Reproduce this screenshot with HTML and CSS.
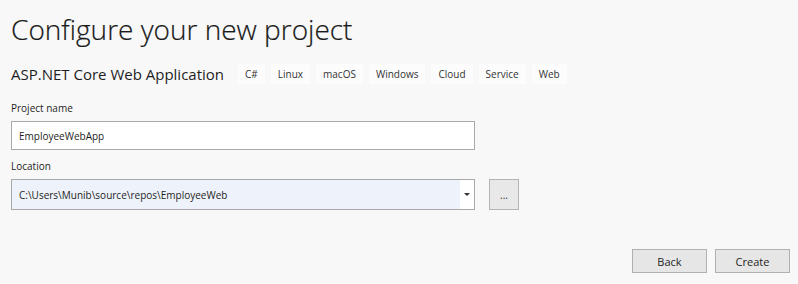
FILE: index.html
```html
<!DOCTYPE html>
<html lang="en">
<head>
  <meta charset="UTF-8">
  <title>Configure your new project</title>
  <link rel="stylesheet" href="styles.css">
</head>
<body>
  <div class="page">
    <h1>Configure your new project</h1>

    <div class="template">
      <span class="template-name">ASP.NET Core Web Application</span>
      <span class="tag">C#</span>
      <span class="tag">Linux</span>
      <span class="tag">macOS</span>
      <span class="tag">Windows</span>
      <span class="tag">Cloud</span>
      <span class="tag">Service</span>
      <span class="tag">Web</span>
    </div>

    <div class="form-group">
      <label for="projectName">Project name</label>
      <input id="projectName" class="text-input" type="text" value="EmployeeWebApp">
    </div>

    <div class="form-group location-group">
      <label for="location">Location</label>
      <div class="location-row">
        <div class="combo" id="location">
          <span class="combo-value">C:\Users\Munib\source\repos\EmployeeWeb</span>
          <span class="combo-arrow"></span>
        </div>
        <button class="browse">...</button>
      </div>
    </div>

    <div class="footer">
      <button class="btn">Back</button>
      <button class="btn">Create</button>
    </div>
  </div>
</body>
</html>
```

FILE: styles.css
```css
html, body {
  margin: 0;
  height: 100%;
}
body {
  font-family: "Open Sans", "Noto Sans", sans-serif;
  background: #f8f8f8;
  color: #1e1e1e;
}
.page {
  box-sizing: border-box;
  height: 284px;
  padding: 9px 8px 11px 11px;
  display: flex;
  flex-direction: column;
}
h1 {
  margin: 0;
  font-size: 28px;
  font-weight: 300;
  line-height: 40px;
  color: #1a1a1a;
  -webkit-text-stroke: 0.2px #1a1a1a;
}
.template {
  display: flex;
  align-items: center;
  height: 22px;
  margin-top: 14px;
}
.template-name {
  font-size: 15px;
  margin-right: 14px;
  color: #1e1e1e;
}
.tag {
  font-size: 10px;
  background: #fcfcfc;
  color: #333;
  padding: 3px 7px;
  margin-right: 6px;
}
.form-group {
  margin-top: 16px;
}
.location-group {
  margin-top: 9px;
}
label {
  display: block;
  font-size: 10px;
  line-height: 15px;
  color: #1e1e1e;
  margin-bottom: 5px;
}
.text-input, .combo {
  box-sizing: border-box;
  width: 464px;
  height: 29px;
  border: 1px solid #a9a9a9;
  font-family: inherit;
  font-size: 10px;
  color: #1e1e1e;
  padding: 0 7px;
  background: #fff;
}
.location-row {
  display: flex;
  align-items: center;
  gap: 14px;
}
.combo {
  display: flex;
  align-items: center;
  justify-content: space-between;
  height: 31px;
  padding-right: 0;
  background: linear-gradient(to right, #eef2fa 0, #eef2fa calc(100% - 14px), #fff calc(100% - 14px));
}
.combo-arrow {
  width: 0;
  height: 0;
  border-left: 3px solid transparent;
  border-right: 3px solid transparent;
  border-top: 3px solid #333;
  margin-right: 4px;
}
.browse {
  box-sizing: border-box;
  width: 30px;
  height: 31px;
  border: 1px solid #b4b4b4;
  background: #e8e8e8;
  font-family: inherit;
  font-size: 10px;
  color: #333;
  padding: 0;
}
.footer {
  margin-top: auto;
  display: flex;
  justify-content: flex-end;
  gap: 8px;
}
.btn {
  box-sizing: border-box;
  width: 75px;
  height: 24px;
  border: 1px solid #b0b0b0;
  background: #e6e6e6;
  font-family: inherit;
  font-size: 11px;
  color: #1e1e1e;
  padding: 0;
}
```
